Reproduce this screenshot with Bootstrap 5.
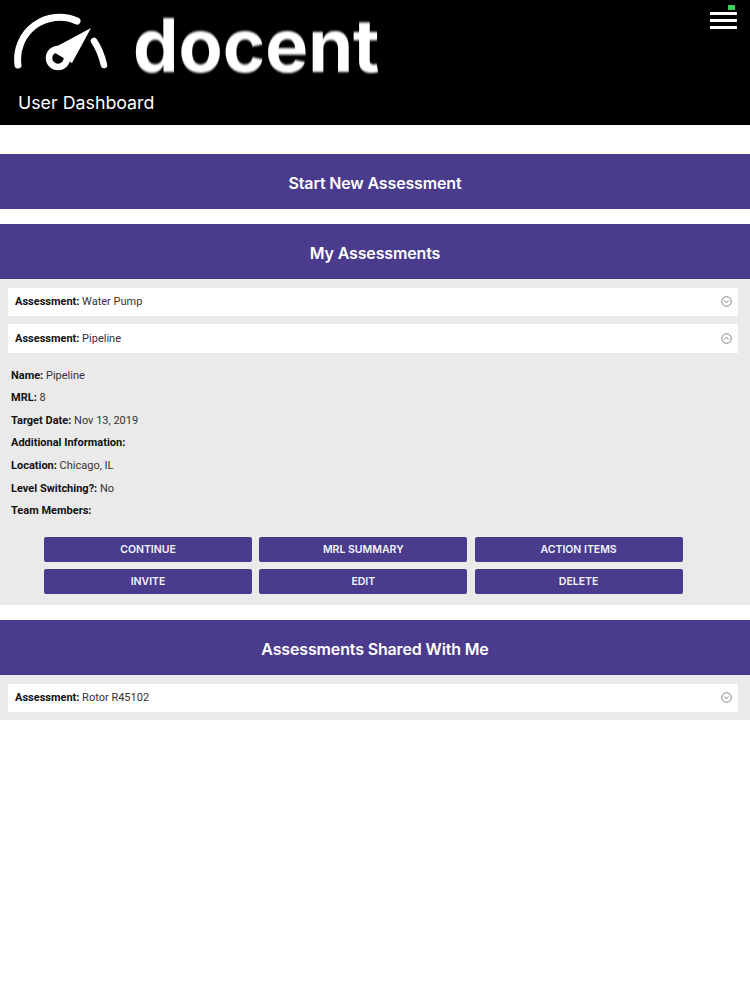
<!DOCTYPE html>
<html lang="en">
<head>
<meta charset="utf-8">
<title>User Dashboard</title>
<link href="https://cdn.jsdelivr.net/npm/bootstrap@5.3.0/dist/css/bootstrap.min.css" rel="stylesheet">
<style>
body{font-family:Roboto,"Liberation Sans",sans-serif;background:#fff;color:#222;font-size:11px;width:750px;height:1000px;overflow:hidden}
.hdr{background:#000;height:124.5px;color:#fff;position:relative}
.logo-row{height:91px;padding:13px 0 0 14px;gap:25px}
.logo-word{font-family:Inter,"Liberation Sans",sans-serif;font-weight:700;font-size:74px;line-height:72px;margin-top:-4px;color:#fff;filter:blur(.8px);transform:scaleX(.975);transform-origin:0 50%}
.hdr-title{font-family:Inter,"Liberation Sans",sans-serif;font-size:17.8px;line-height:24px;padding-left:18px;margin:0;font-weight:400;color:#fff}
.burger{position:absolute;top:12px;left:710px;width:27px;display:flex;flex-direction:column;gap:4.5px}
.burger i{display:block;height:2.5px;background:#fff}
.batt{position:absolute;top:5px;left:728px;width:7px;height:5px;background:#3fce5c}
.band{background:#4a3b8c;color:#fff;height:55px;font-family:Inter,"Liberation Sans",sans-serif;font-size:16px;font-weight:600;letter-spacing:-.15px;margin:0;padding-top:4px}
.gap-a{height:29.5px}.gap-b{height:15px}
.panel{background:#ebeaeb;padding:8.5px 12px 8px 8px}
.acc{background:#fff;height:28.5px;padding:0 6.5px 0 7px;color:#333}
.acc span{padding-top:1px}
.acc+.acc{margin-top:8px}
.acc b,.info b{font-weight:700;color:#111}
.chev{width:11px;height:11px;flex:none}
.info{padding:0 0 0 3px;margin-top:12px}
.info p{margin:0;height:22.67px;line-height:22.67px;color:#333}
.btn-grid{display:grid;grid-template-columns:repeat(3,208px);gap:7px 7.3px;padding:14px 0 3px 36px}
.btn.act{background:#4a3b8c;color:#f4f3fa;border:0;border-radius:2px;height:25px;padding:1px 0 0;font-family:Inter,"Liberation Sans",sans-serif;font-size:10.5px;font-weight:600}
</style>
</head>
<body>
<header class="hdr">
  <div class="logo-row d-flex align-items-start">
    <svg width="94" height="60" viewBox="0 0 94 60" aria-hidden="true" fill="none" stroke="#fff" stroke-linecap="round" style="filter:blur(.5px)">
      <path d="M4 52A42 42 0 0 1 63 8" stroke-width="7"/>
      <path d="M80 28C85 35 88 44 90 52" stroke-width="6.5"/>
      <circle cx="44" cy="45" r="9" stroke-width="6.5"/>
      <path d="M36 37L77 15L58 50Z" fill="#fff" stroke="none"/>
    </svg>
    <span class="logo-word">docent</span>
  </div>
  <h1 class="hdr-title">User Dashboard</h1>
  <span class="batt"></span>
  <div class="burger"><i></i><i></i><i></i></div>
</header>
<div class="gap-a"></div>
<h2 class="band d-flex align-items-center justify-content-center">Start New Assessment</h2>
<div class="gap-b"></div>
<h2 class="band d-flex align-items-center justify-content-center">My Assessments</h2>
<section class="panel">
  <div class="acc d-flex align-items-center justify-content-between"><span><b>Assessment:</b> Water Pump</span>
    <svg class="chev" viewBox="0 0 12 12" fill="none" stroke="#555" stroke-width=".8"><circle cx="6" cy="6" r="5.2"/><path d="M3.6 5L6 7.4L8.4 5"/></svg></div>
  <div class="acc d-flex align-items-center justify-content-between"><span><b>Assessment:</b> Pipeline</span>
    <svg class="chev" viewBox="0 0 12 12" fill="none" stroke="#555" stroke-width=".8"><circle cx="6" cy="6" r="5.2"/><path d="M3.6 7L6 4.6L8.4 7"/></svg></div>
  <div class="info">
    <p><b>Name:</b> Pipeline</p>
    <p><b>MRL:</b> 8</p>
    <p><b>Target Date:</b> Nov 13, 2019</p>
    <p><b>Additional Information:</b></p>
    <p><b>Location:</b> Chicago, IL</p>
    <p><b>Level Switching?:</b> No</p>
    <p><b>Team Members:</b></p>
  </div>
  <div class="btn-grid">
    <button class="btn act" type="button">CONTINUE</button>
    <button class="btn act" type="button">MRL SUMMARY</button>
    <button class="btn act" type="button">ACTION ITEMS</button>
    <button class="btn act" type="button">INVITE</button>
    <button class="btn act" type="button">EDIT</button>
    <button class="btn act" type="button">DELETE</button>
  </div>
</section>
<div class="gap-b"></div>
<h2 class="band d-flex align-items-center justify-content-center">Assessments Shared With Me</h2>
<section class="panel">
  <div class="acc d-flex align-items-center justify-content-between"><span><b>Assessment:</b> Rotor R45102</span>
    <svg class="chev" viewBox="0 0 12 12" fill="none" stroke="#555" stroke-width=".8"><circle cx="6" cy="6" r="5.2"/><path d="M3.6 5L6 7.4L8.4 5"/></svg></div>
</section>
<script src="https://cdn.jsdelivr.net/npm/bootstrap@5.3.0/dist/js/bootstrap.bundle.min.js"></script>
</body>
</html>
